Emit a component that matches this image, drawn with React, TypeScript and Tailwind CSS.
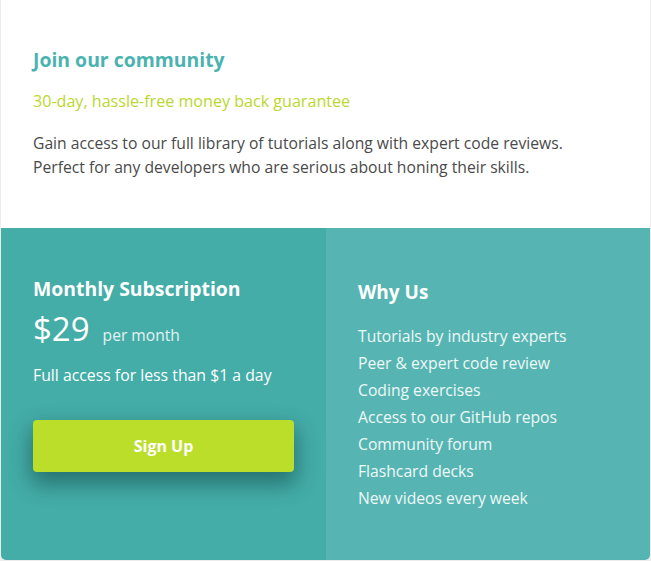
import React from "react";

const font = { fontFamily: "'Open Sans', Lato, sans-serif" };

export default function App() {
  const items = [
    "Tutorials by industry experts",
    "Peer & expert code review",
    "Coding exercises",
    "Access to our GitHub repos",
    "Community forum",
    "Flashcard decks",
    "New videos every week",
  ];
  return (
    <div className="min-h-screen bg-[#ececec] px-[1px]" style={font}>
      <div className="bg-white rounded-b-[5px] overflow-hidden">
        <div className="pl-[32px] pt-[46px] pb-[49px]">
          <h1 className="text-[19.4px] leading-[28px] font-bold text-[#4bb3af]">Join our community</h1>
          <p className="mt-[15px] text-[16.1px] leading-[24px] text-[#bad72e]">30-day, hassle-free money back guarantee</p>
          <p className="mt-[18px] text-[15.7px] leading-[24px] text-[#4a4a4a]">
            Gain access to our full library of tutorials along with expert code reviews.
            <br />
            Perfect for any developers who are serious about honing their skills.
          </p>
        </div>
        <div className="flex h-[332px]">
          <div className="w-[325px] bg-[#44ada8] pl-[32px] pt-[47px] text-white">
            <h2 className="text-[19.4px] leading-[28px] font-bold">Monthly Subscription</h2>
            <div className="mt-[8px] flex items-baseline">
              <span className="text-[33px] leading-[36px]">$29</span>
              <span className="ml-[13px] text-[15.6px] text-white/85">per month</span>
            </div>
            <p className="mt-[16px] text-[15.8px] leading-[24px]">Full access for less than $1 a day</p>
            <button className="mt-[33px] w-[261px] h-[52px] rounded-[4px] bg-[#bade2a] text-white text-[16px] font-bold shadow-[0_10px_22px_2px_rgba(0,40,40,0.45)]">
              Sign Up
            </button>
          </div>
          <div className="flex-1 bg-[#56b5b2] pl-[32px] pt-[50px] text-white">
            <h2 className="text-[19px] leading-[28px] font-bold">Why Us</h2>
            <ul className="mt-[17px]">
              {items.map((t) => (
                <li key={t} className="text-[15.7px] leading-[27px] text-white/90">{t}</li>
              ))}
            </ul>
          </div>
        </div>
      </div>
    </div>
  );
}
